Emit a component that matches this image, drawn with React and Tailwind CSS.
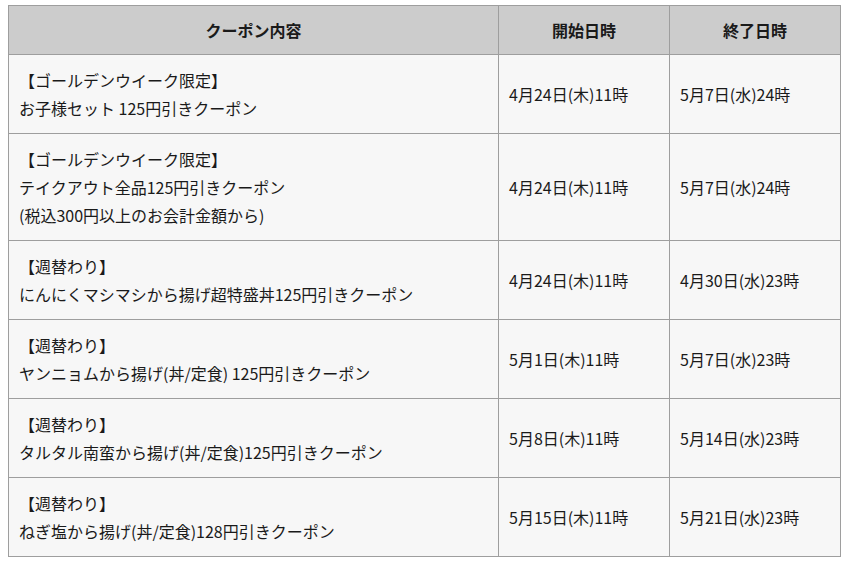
const rows = [
  {
    lines: ['【ゴールデンウイーク限定】', 'お子様セット 125円引きクーポン'],
    start: '4月24日(木)11時',
    end: '5月7日(水)24時',
  },
  {
    lines: ['【ゴールデンウイーク限定】', 'テイクアウト全品125円引きクーポン', '(税込300円以上のお会計金額から)'],
    start: '4月24日(木)11時',
    end: '5月7日(水)24時',
  },
  {
    lines: ['【週替わり】', 'にんにくマシマシから揚げ超特盛丼125円引きクーポン'],
    start: '4月24日(木)11時',
    end: '4月30日(水)23時',
  },
  {
    lines: ['【週替わり】', 'ヤンニョムから揚げ(丼/定食) 125円引きクーポン'],
    start: '5月1日(木)11時',
    end: '5月7日(水)23時',
  },
  {
    lines: ['【週替わり】', 'タルタル南蛮から揚げ(丼/定食)125円引きクーポン'],
    start: '5月8日(木)11時',
    end: '5月14日(水)23時',
  },
  {
    lines: ['【週替わり】', 'ねぎ塩から揚げ(丼/定食)128円引きクーポン'],
    start: '5月15日(木)11時',
    end: '5月21日(水)23時',
  },
];

export default function App() {
  return (
    <div className="min-h-screen bg-white pt-[5px] pl-[8px] font-['Noto_Sans_CJK_JP',sans-serif] text-[16px] text-[#1a1a1a]">
      <table className="w-[833px] border-collapse border border-[#9e9e9e]">
        <thead>
          <tr className="h-[49px] bg-[#cccccc]">
            <th className="border border-[#9e9e9e] font-bold">クーポン内容</th>
            <th className="w-[171px] border border-[#9e9e9e] font-bold">開始日時</th>
            <th className="w-[171px] border border-[#9e9e9e] font-bold">終了日時</th>
          </tr>
        </thead>
        <tbody>
          {rows.map((r, i) => (
            <tr key={i} className="bg-[#f7f7f7]">
              <td className="border border-[#9e9e9e] px-[10px] py-[11px] leading-[28px]">
                {r.lines.map((l, j) => (
                  <div key={j}>{l}</div>
                ))}
              </td>
              <td className="border border-[#9e9e9e] px-[10px] leading-[28px]">{r.start}</td>
              <td className="border border-[#9e9e9e] px-[10px] leading-[28px]">{r.end}</td>
            </tr>
          ))}
        </tbody>
      </table>
    </div>
  );
}
